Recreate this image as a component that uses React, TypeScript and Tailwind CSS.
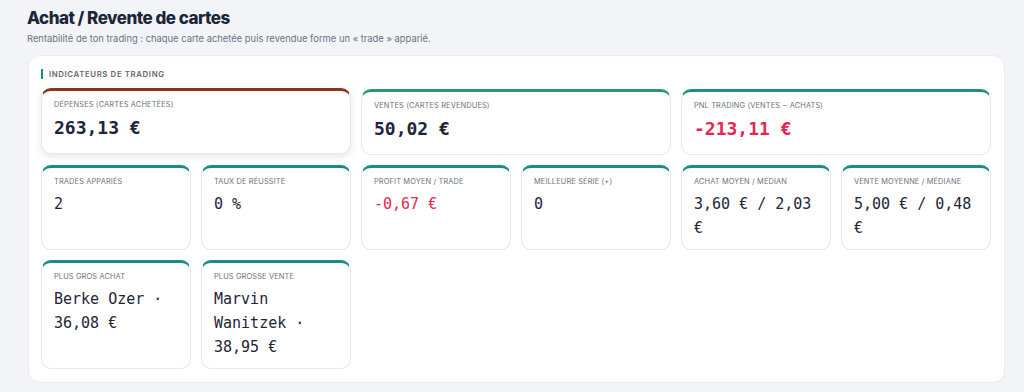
import React from "react";

type Card = {
  label: string;
  value: string;
  span?: boolean;
  big?: boolean;
  red?: boolean;
  accent: string;
  hover?: boolean;
};

const cards: Card[] = [
  { label: "Dépenses (cartes achetées)", value: "263,13 €", span: true, big: true, accent: "border-t-[#8a3420]", hover: true },
  { label: "Ventes (cartes revendues)", value: "50,02 €", span: true, big: true, accent: "border-t-[#2a9878]" },
  { label: "PnL trading (ventes − achats)", value: "-213,11 €", span: true, big: true, red: true, accent: "border-t-[#1f8f84]" },
  { label: "Trades appariés", value: "2", accent: "border-t-[#1a8c88]" },
  { label: "Taux de réussite", value: "0 %", accent: "border-t-[#1a8c88]" },
  { label: "Profit moyen / trade", value: "-0,67 €", red: true, accent: "border-t-[#1a8c88]" },
  { label: "Meilleure série (+)", value: "0", accent: "border-t-[#1a8c88]" },
  { label: "Achat moyen / médian", value: "3,60 € / 2,03 €", accent: "border-t-[#1a8c88]" },
  { label: "Vente moyenne / médiane", value: "5,00 € / 0,48 €", accent: "border-t-[#1a8c88]" },
  { label: "Plus gros achat", value: "Berke Ozer · 36,08 €", accent: "border-t-[#1a8c88]" },
  { label: "Plus grosse vente", value: "Marvin Wanitzek · 38,95 €", accent: "border-t-[#1a8c88]" },
];

export default function App() {
  return (
    <div
      className="min-h-[392px] bg-[#f3f4f8] px-[27px] pt-[6px] pb-[10px]"
      style={{ fontFamily: "Inter, 'Noto Sans', sans-serif" }}
    >
      <h1 className="text-[17px] leading-[24px] font-extrabold text-[#1c2638] tracking-[-0.03em]">
        Achat / Revente de cartes
      </h1>
      <p className="mt-[2px] text-[9.4px] leading-[14px] text-[#6b7280]">
        Rentabilité de ton trading : chaque carte achetée puis revendue forme un « trade » apparié.
      </p>
      <section className="mt-[9px] ml-[1px] w-[977px] rounded-[12px] border border-[#e8eaf0] bg-white pl-[12px] pr-[13px] pt-[13px] pb-[13px]">
        <div className="flex items-center gap-[6px]">
          <span className="h-[10px] w-[2px] bg-[#138a8a]" />
          <span className="text-[7.8px] leading-[10px] font-semibold uppercase tracking-[0.08em] text-[#5f6775]">
            Indicateurs de trading
          </span>
        </div>
        <div className="mt-[10px] grid grid-cols-6 gap-[10px]">
          {cards.map((c, i) => (
            <div
              key={i}
              className={`flex flex-col rounded-[10px] border border-[#e6e8ee] border-t-[3px] ${c.accent} bg-white px-[12px] pt-[9px] ${
                c.span ? "col-span-2 pb-[11px]" : "pb-[9px]"
              } ${c.hover ? "-translate-y-[1px] shadow-[0_3px_8px_rgba(15,23,42,0.10)]" : ""}`}
            >
              <div className="text-[7.4px] leading-[10px] uppercase tracking-[0.02em] text-[#6b7280] whitespace-nowrap">
                {c.label}
              </div>
              <div
                className={`${c.big ? "mt-[4px] text-[18px] leading-[28px] font-semibold" : "mt-[5px] text-[15px] leading-[24px] font-medium"} ${
                  c.red ? "text-[#e3284f]" : "text-[#1c2638]"
                }`}
                style={{ fontFamily: "'DejaVu Sans Mono', 'Liberation Mono', monospace" }}
              >
                {c.value}
              </div>
            </div>
          ))}
        </div>
      </section>
    </div>
  );
}
